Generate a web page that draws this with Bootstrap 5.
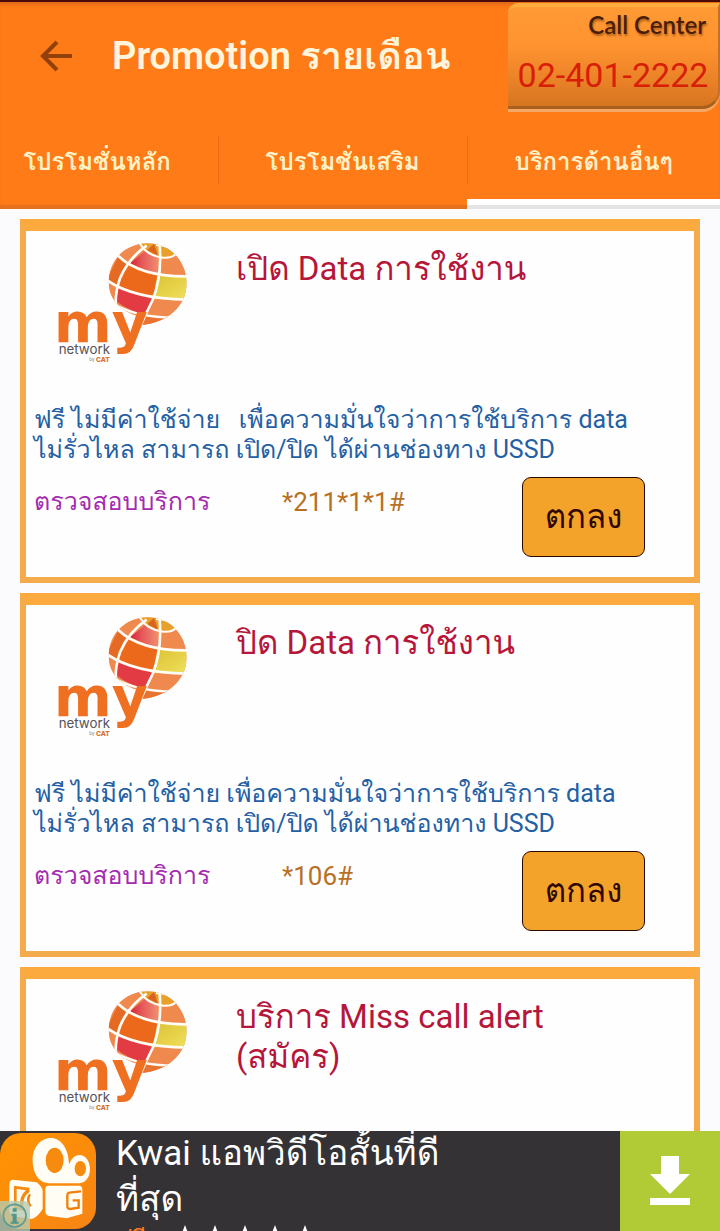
<!DOCTYPE html>
<html lang="th">
<head>
<meta charset="utf-8">
<meta name="viewport" content="width=device-width, initial-scale=1">
<title>Promotion รายเดือน</title>
<link rel="stylesheet" href="https://cdn.jsdelivr.net/npm/bootstrap@5.3.0/dist/css/bootstrap.min.css">
<script src="https://cdn.jsdelivr.net/npm/bootstrap@5.3.0/dist/js/bootstrap.bundle.min.js" defer></script>
<style>
body{font-family:Roboto,Loma,sans-serif;background:#fbfafc}
.top-area{background:#ff7b17;border-top:2px solid #4a0a08;box-shadow:inset 0 4px 3px -1px #e56b1a}
.title-bar{height:123px;padding-left:38px}
.back-btn{width:36px;height:36px}
.page-title{font-size:38px;font-weight:600;line-height:48px;color:#fff5dc;margin-left:38px}
.call-box{width:212px;height:106px;margin-top:1px;padding:4px 8px 0;border-radius:10px 0 18px 0;background:linear-gradient(#ff9a34,#ff9330 40%,#e98127 75%,#d67621);border-top:4px solid #ffae3e;border-right:2px solid #c9701f;border-bottom:3px solid #a8601c;box-shadow:0 3px 0 #f5a765}
.call-name{font:600 24px/28px Lato,sans-serif;color:#4a1d08;text-shadow:1px 2px 2px #b0601c}
.call-number{font-size:34px;line-height:40px;color:#d81e06;margin-top:16px}
.tab-row{height:84px}
.tab-row a{padding:0 44px;font-size:24px;font-weight:700;line-height:74px;color:#fff2c8;border-bottom:4px solid #e8701c}
.tab-row a:first-child{padding-left:20px}
.tab-row a + a{background:linear-gradient(#ea6c14,#ea6c14) 0 11px/1px 48px no-repeat}
.tab-row a.active{border-bottom-color:#e4e4e6;box-shadow:inset 0 -6px #fff}
.promo-list{padding:10px 20px 0;gap:10px}
.promo{background:#fefefe;border:6px solid #f4ab4c;border-top:12px solid #fcaa3e;padding:0 8px 20px}
.promo-head{min-height:174px}
.logo-cell{width:202px;padding:4px 0 0 16px}
.promo h2{font-size:33px;line-height:40px;color:#b5163a;padding-top:18px}
.promo p{font-size:25px;line-height:30px;color:#2460a4;white-space:pre-wrap}
.promo-foot{padding-top:12px;font-size:25px;line-height:50px}
.check{width:248px;color:#a42bb0}
.code{width:240px;font-size:26px;color:#b87024}
.ok-btn{width:123px;height:80px;border:1px solid #2a0800;border-radius:9px;background:#f3a32a;color:#300800;font-size:33px;line-height:60px}
.ad{height:100px;background:#353235;color:#fff}
.ad-text{font-size:35px;line-height:46px;padding-left:20px}
.ad-free{font-size:24px;line-height:32px;color:#ff7a20;gap:24px}
.ad-get{width:100px;background:#b0cb36}
</style>
</head>
<body>
<svg width="0" height="0" class="position-absolute" aria-hidden="true">
<defs>
<linearGradient id="redCell"><stop offset="0" stop-color="#d42038"/><stop offset=".4" stop-color="#e5565a"/><stop offset="1" stop-color="#f08e70"/></linearGradient>
<linearGradient id="yellowCell" x2="1" y2="1"><stop offset="0" stop-color="#dbc234"/><stop offset="1" stop-color="#f0e05c"/></linearGradient>
<linearGradient id="kwaiBg" x2="1" y2="1"><stop offset="0" stop-color="#ff9400"/><stop offset="1" stop-color="#f78416"/></linearGradient>
<clipPath id="ball"><path d="M176 142C176 75 226 25 293 25S410 78 410 145C410 215 350 266 272 270Q282 258 280 246C222 238 176 200 176 142Z"/></clipPath>
<symbol id="globe" viewBox="0 0 435 405">
<g clip-path="url(#ball)">
<path fill="#f0894e" d="M170 20h245v255H170z"/>
<path fill="#e9a02b" d="M270 15h120v45L330 72 285 55z"/>
<path fill="#d9631f" d="M292 45l20-18 12 35z"/>
<path fill="url(#redCell)" d="M240 85L285 48 325 62 320 122z"/>
<path fill="#e56b24" d="M170 135L205 65 240 85 206 150z"/>
<path fill="#ec681b" d="M206 150L240 85 322 118 308 190Q250 180 206 150z"/>
<path fill="url(#yellowCell)" d="M322 122L412 125 408 190 310 193z"/>
<path fill="#e23b43" d="M200 155L308 192 284 240Q230 225 196 196z"/>
<path fill="#e97331" d="M270 275L285 245 380 246 340 275z"/>
<g fill="none" stroke="#fffdf5">
<path stroke-width="8" d="M328 22Q338 120 308 195Q288 235 272 272"/>
<path stroke-width="8" d="M290 32Q235 70 210 130Q196 170 197 210"/>
<path stroke-width="6" d="M270 26Q290 62 340 68Q370 70 382 52Q360 32 318 30"/>
<path stroke-width="8" d="M204 62Q270 125 410 124"/>
<path stroke-width="8" d="M172 136Q250 192 415 194"/>
<path stroke-width="7" d="M188 205Q260 250 385 248"/>
</g></g>
</symbol>
</defs>
</svg>
<div class="d-flex flex-column vh-100 overflow-hidden">
<header class="top-area flex-shrink-0">
<div class="title-bar d-flex">
<div class="d-flex align-items-center flex-grow-1 pb-3">
<button type="button" class="btn p-0 border-0 back-btn d-flex" aria-label="กลับ"><svg width="36" height="36" viewBox="0 0 36 36" fill="none" stroke="#91400b" stroke-width="4"><path d="M34 18H5M19 4L5 18l14 14"/></svg></button>
<h1 class="page-title mb-0 text-nowrap">Promotion รายเดือน</h1>
</div>
<a href="tel:024012222" class="call-box text-decoration-none flex-shrink-0">
<div class="call-name text-end pe-1">Call Center</div>
<div class="call-number text-center text-nowrap">02-401-2222</div>
</a>
</div>
<nav class="tab-row d-flex text-center text-nowrap">
<a href="#main" class="flex-fill text-decoration-none">โปรโมชั่นหลัก</a>
<a href="#extra" class="flex-fill text-decoration-none">โปรโมชั่นเสริม</a>
<a href="#other" class="flex-fill text-decoration-none active" aria-current="page">บริการด้านอื่นๆ</a>
</nav>
</header>
<main class="promo-list flex-fill overflow-hidden d-flex flex-column">
<article class="promo flex-shrink-0">
<div class="promo-head d-flex">
<div class="logo-cell flex-shrink-0"><svg width="145" height="135" viewBox="0 0 435 405"><use href="#globe"/><text x="12" y="320" font-family="DejaVu Sans" font-size="166" font-weight="700" fill="#f07021">my</text><g font-family="Inter"><text x="26" y="356" font-size="40" fill="#55525a">network</text><text x="138" y="381" font-size="20" font-weight="800" fill="#d9702c">CAT</text><text x="118" y="378" font-size="13" fill="#777">by</text></g></svg></div>
<h2 class="mb-0 fw-normal">เปิด Data การใช้งาน</h2>
</div>
<p class="mb-0">ฟรี ไม่มีค่าใช้จ่าย   เพื่อความมั่นใจว่าการใช้บริการ data
ไม่รั่วไหล สามารถ เปิด/ปิด ได้ผ่านช่องทาง USSD</p>
<div class="promo-foot d-flex"><div class="check">ตรวจสอบบริการ</div><div class="code">*211*1*1#</div><button type="button" class="ok-btn p-0">ตกลง</button></div>
</article>
<article class="promo flex-shrink-0">
<div class="promo-head d-flex">
<div class="logo-cell flex-shrink-0"><svg width="145" height="135" viewBox="0 0 435 405"><use href="#globe"/><text x="12" y="320" font-family="DejaVu Sans" font-size="166" font-weight="700" fill="#f07021">my</text><g font-family="Inter"><text x="26" y="356" font-size="40" fill="#55525a">network</text><text x="138" y="381" font-size="20" font-weight="800" fill="#d9702c">CAT</text><text x="118" y="378" font-size="13" fill="#777">by</text></g></svg></div>
<h2 class="mb-0 fw-normal">ปิด Data การใช้งาน</h2>
</div>
<p class="mb-0">ฟรี ไม่มีค่าใช้จ่าย เพื่อความมั่นใจว่าการใช้บริการ data
ไม่รั่วไหล สามารถ เปิด/ปิด ได้ผ่านช่องทาง USSD</p>
<div class="promo-foot d-flex"><div class="check">ตรวจสอบบริการ</div><div class="code">*106#</div><button type="button" class="ok-btn p-0">ตกลง</button></div>
</article>
<article class="promo flex-shrink-0">
<div class="promo-head d-flex">
<div class="logo-cell flex-shrink-0"><svg width="145" height="135" viewBox="0 0 435 405"><use href="#globe"/><text x="12" y="320" font-family="DejaVu Sans" font-size="166" font-weight="700" fill="#f07021">my</text><g font-family="Inter"><text x="26" y="356" font-size="40" fill="#55525a">network</text><text x="138" y="381" font-size="20" font-weight="800" fill="#d9702c">CAT</text><text x="118" y="378" font-size="13" fill="#777">by</text></g></svg></div>
<h2 class="mb-0 fw-normal">บริการ Miss call alert<br>(สมัคร)</h2>
</div>
</article>
</main>
<footer class="ad d-flex flex-shrink-0 overflow-hidden">
<svg class="flex-shrink-0" width="96" height="100" viewBox="0 0 288 300" role="img" aria-label="Kwai"><rect y="6" width="288" height="288" rx="64" fill="url(#kwaiBg)"/>
<g transform="translate(0 -6)"><path fill="#fffdf4" d="M153 27C180 27 206 55 207 106Q218 78 240 78C260 80 270 100 270 122C269 145 258 160 238 163H148C112 160 98 128 98 92C98 55 122 27 153 27z"/><ellipse cx="164" cy="94" rx="27" ry="38" fill="#f68b10"/><ellipse cx="241" cy="119" rx="17" ry="23" fill="#f68b10"/>
<path fill="#fffdf4" d="M38 152L110 160Q126 172 128 186V240Q112 266 94 270L40 262Q28 258 28 244V166Q28 154 38 152zM144 170H240Q247 172 247 180V254L200 268 144 260Q136 256 136 248V178Q136 171 144 170z"/>
<path fill="#f68b10" d="M42 170L88 176V190Q70 200 70 226V246L42 240z"/><path fill="#fffdf4" d="M50 180L78 184Q58 200 60 232L50 230z"/><path fill="none" stroke="#f0800c" stroke-width="7" d="M90 196Q78 212 92 232M243 187L208 191Q202 192 202 200V232Q202 240 210 240L236 236V214H218"/></g>
<path fill="#b9cbb0" fill-opacity=".8" d="M0 210H72Q90 212 90 230V300H0z"/><circle cx="44" cy="254" r="34" fill="none" stroke="#5b9c93" stroke-width="5"/><path fill="#4e978e" d="M38 232h12v10H38zM34 248h16v24h6v6H32v-6h6v-18h-4z"/></svg>
<div class="ad-text flex-grow-1 text-nowrap">Kwai แอพวิดีโอสั้นที่ดี<br>ที่สุด<div class="ad-free d-flex">ฟรี<svg width="160" height="32" viewBox="0 0 160 32" fill="#fff" role="img" aria-label="5 ดาว"><path id="star" d="M15 2l3 8h9l-7 5 3 9-8-5-8 5 3-9-7-5h9z"/><use href="#star" x="30"/><use href="#star" x="60"/><use href="#star" x="90"/><use href="#star" x="120"/></svg></div></div>
<a href="#install" class="ad-get flex-shrink-0 d-flex align-items-center justify-content-center" aria-label="ดาวน์โหลด"><svg width="40" height="50" viewBox="0 0 40 50" fill="#fff"><path d="M11 0h18v18h11L20 38 0 18h11zM0 42h40v7H0z"/></svg></a>
</footer>
</div>
</body>
</html>
